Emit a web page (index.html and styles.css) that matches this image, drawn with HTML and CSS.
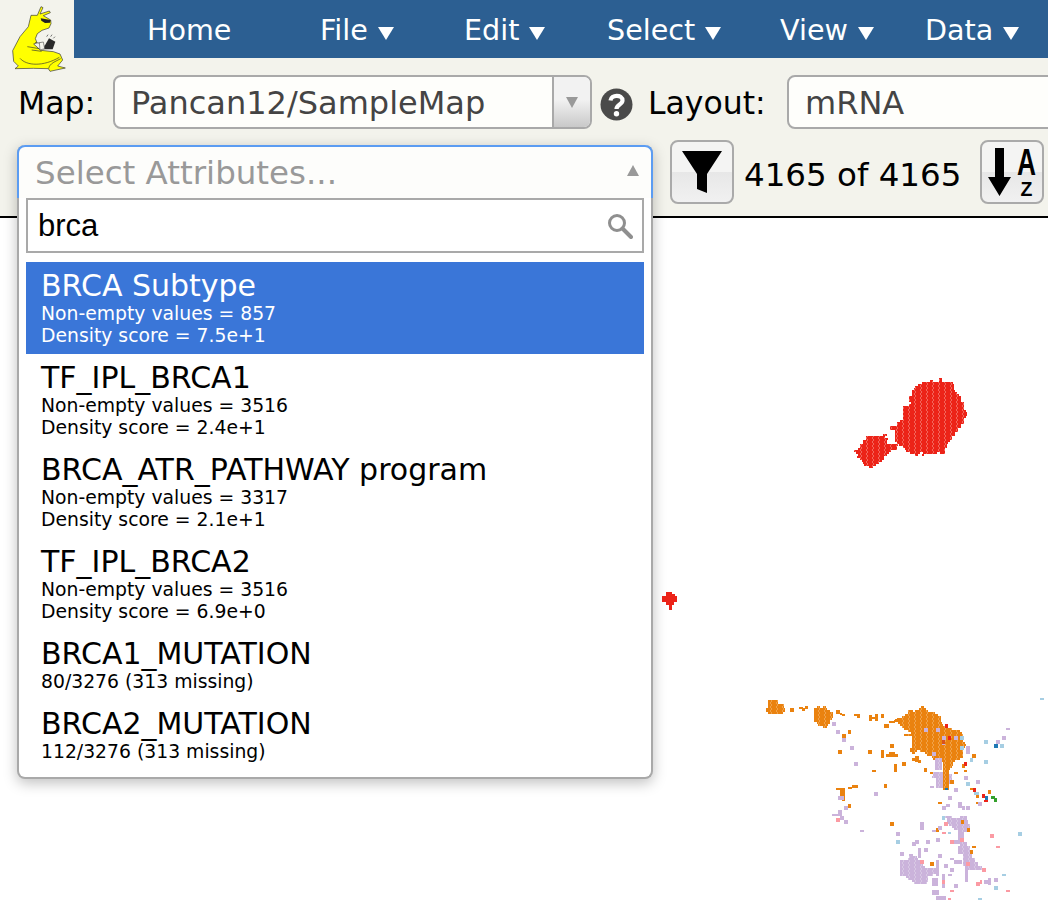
FILE: index.html
```html
<!DOCTYPE html>
<html lang="en">
<head>
<meta charset="utf-8">
<title>Tumor Map</title>
<link rel="stylesheet" href="styles.css">
</head>
<body>
<header class="header">
  <div class="top">
    <div class="logo">
      <svg width="74" height="74" viewBox="0 0 222 222">
        <path d="M93 46 L112 46 L123 20 L129 23 L120 42 L148 33 L151 38 L130 47 L152 60 L153 71 L147 84 L126 91 L112 101 L106 116 L111 128 L101 132 L122 151 L160 155 L180 162 L188 180 L173 198 L196 204 L150 214 L145 206 L100 205 L45 206 L55 198 L41 184 L38 152 L60 110 L85 80 Z" fill="#ffff00" stroke="#333" stroke-width="2"/>
        <path d="M122 55 L152 60 L150 68 L135 69 L124 62 Z" fill="#222"/>
        <path d="M128 148 L147 115 L166 125 L158 148 Z" fill="#2a2a2a"/>
        <path d="M140 110 L144 104 M152 110 L156 104 M160 115 L165 110" stroke="#333" stroke-width="2"/>
        <path d="M105 128 L128 130 L132 138 L120 140 M82 140 L118 146 M95 150 L125 154 M60 175 C80 198 130 200 178 172 M146 206 C148 190 168 184 182 176" fill="none" stroke="#333" stroke-width="2"/>
        <path d="M118 128 L130 126 L134 146 L120 150 Z" fill="#f4f4ec" stroke="#333" stroke-width="1.500"/>
      </svg>
    </div>
    <nav class="nav">
      <a class="nav-item nav-home">Home</a>
      <a class="nav-item nav-file">File <i class="caret"></i></a>
      <a class="nav-item nav-edit">Edit <i class="caret"></i></a>
      <a class="nav-item nav-select">Select <i class="caret"></i></a>
      <a class="nav-item nav-view">View <i class="caret"></i></a>
      <a class="nav-item">Data <i class="caret"></i></a>
    </nav>
  </div>
  <div class="row-map">
    <span class="label">Map:</span>
    <div class="select map-select">
      <span class="select-text">Pancan12/SampleMap</span>
      <span class="select-arrow"><i class="arrow-down"></i></span>
    </div>
    <svg class="help" width="33" height="33" viewBox="0 0 33 33">
      <circle cx="16.500" cy="16.500" r="16" fill="#4a4a4a"/>
      <path d="M10.500 12.500 C11 6.500 22.500 6 22.500 12.500 C22.500 16.500 16.500 16.500 16.500 21" fill="none" stroke="#fff" stroke-width="4.200"/>
      <circle cx="16.500" cy="25.800" r="2.700" fill="#fff"/>
    </svg>
    <span class="label label-layout">Layout:</span>
    <div class="select layout-select"><span class="select-text">mRNA</span></div>
  </div>
  <div class="row-attr">
    <div class="attr-spacer"></div>
    <button class="tool-btn">
      <svg width="40" height="42" viewBox="0 0 40 42"><path d="M0 0 H40 L25 23 V42 L15 38 V23 Z" fill="#000"/></svg>
    </button>
    <span class="count">4165 of 4165</span>
    <button class="tool-btn">
      <svg width="56" height="52" viewBox="0 0 56 52">
        <path d="M11 2 H20 V31 H27 L15.500 50 L4 31 H11 Z" fill="#000"/>
        <text class="sort-a" x="42.500" y="29" text-anchor="middle" textLength="19" lengthAdjust="spacingAndGlyphs">A</text>
        <text class="sort-z" x="42.500" y="50" text-anchor="middle">Z</text>
      </svg>
    </button>
  </div>
</header>

<main class="canvas">
  <svg class="map" width="1048" height="682" viewBox="0 218 1048 682" shape-rendering="crispEdges">
    <defs>
      <pattern id="stripe-red" width="18" height="12" patternUnits="userSpaceOnUse">
        <rect width="18" height="12" fill="#ec2318"/>
        <rect x="6" width="3" height="6" fill="#f2665c"/>
        <rect x="9" y="6" width="3" height="6" fill="#f2665c"/>
      </pattern>
      <pattern id="stripe-orange" width="18" height="12" patternUnits="userSpaceOnUse">
        <rect width="18" height="12" fill="#ea820f"/>
        <rect x="6" width="3" height="6" fill="#f0a24a"/>
        <rect x="9" y="6" width="3" height="6" fill="#f0a24a"/>
      </pattern>
      <pattern id="stripe-purple" width="18" height="12" patternUnits="userSpaceOnUse">
        <rect width="18" height="12" fill="#cbb3db"/>
        <rect x="6" width="3" height="6" fill="#d8c8e4"/>
        <rect x="9" y="6" width="3" height="6" fill="#d8c8e4"/>
      </pattern>
    </defs>

    <g transform="translate(840 365) scale(.33333)">
      <path fill="url(#stripe-red)" d="M298 40h8v6h-8z M270 46h10v6h-10z M298 46h8v6h-8z M245 52h95v6h-95z M235 58h107v6h-107z M225 64h117v6h-117z M222 70h120v6h-120z M216 76h129v6h-129z M216 82h136v6h-136z M216 88h142v6h-142z M207 94h157v6h-157z M207 100h157v6h-157z M207 106h157v6h-157z M213 112h159v6h-159z M207 118h165v6h-165z M188 124h184v6h-184z M188 130h184v6h-184z M188 136h190v6h-190z M188 142h194v6h-194z M188 148h194v6h-194z M188 154h190v6h-190z M188 160h184v6h-184z M180 166h192v6h-192z M170 172h202v6h-202z M170 178h194v6h-194z M150 184h214v6h-214z M150 190h205v6h-205z M165 196h190v6h-190z M165 202h180v6h-180z M130 208h10v6h-10z M165 208h180v6h-180z M78 214h57v6h-57z M165 214h170v6h-170z M78 220h67v6h-67z M165 220h170v6h-170z M70 226h70v6h-70z M165 226h165v6h-165z M68 232h72v6h-72z M170 232h155v6h-155z M60 238h115v6h-115z M178 238h142v6h-142z M60 244h110v6h-110z M190 244h130v6h-130z M55 250h115v6h-115z M195 250h120v6h-120z M42 256h110v6h-110z M198 256h118v6h-118z M48 262h100v6h-100z M210 262h30v6h-30z M250 262h40v6h-40z M300 262h15v6h-15z M55 268h85v6h-85z M225 268h10v6h-10z M245 268h8v6h-8z M50 274h82v6h-82z M60 280h72v6h-72z M65 286h62v6h-62z M68 292h50v6h-50z M72 298h36v6h-36z M86 304h12v5h-12z"/>
    </g>

    <path fill="#ec2318" d="M666 592 H672 V594 H675 V596 H677 V602 H674 V605 H672 V610 H669 V605 H666 V602 H662 V596 H666 Z"/>

    <g transform="translate(750 690) scale(.33333)">
      <path fill="url(#stripe-orange)" d="M55 30h29v12h-29z M55 42h47v12h-47z M48 54h57v12h-57z M55 66h45v5h-45z"/>
      <path fill="url(#stripe-orange)" d="M200 48h10v6h-10z M218 48h10v6h-10z M192 54h40v6h-40z M192 60h48v6h-48z M192 66h58v18h-58z M192 84h53v6h-53z M192 90h48v6h-48z M200 96h40v6h-40z M205 102h30v6h-30z M218 108h12v5h-12z"/>
      <path fill="url(#stripe-orange)" d="M512 48h10v6h-10z M508 54h20v6h-20z M475 60h13v6h-13z M495 60h40v6h-40z M475 66h80v6h-80z M465 72h100v6h-100z M455 78h117v6h-117z M440 84h132v6h-132z M432 90h140v6h-140z M445 96h130v6h-130z M450 102h130v6h-130z M455 108h135v6h-135z M462 114h143v6h-143z M475 120h155v6h-155z M482 126h154v6h-154z M462 132h178v6h-178z M486 138h156v12h-156z M486 150h154v6h-154z M486 156h159v6h-159z M486 162h162v6h-162z M486 168h159v6h-159z M480 174h160v6h-160z M480 180h20v6h-20z M510 180h130v6h-130z M485 186h10v6h-10z M525 186h115v6h-115z M530 192h110v6h-110z M545 198h95v6h-95z M550 204h80v6h-80z M575 210h40v6h-40z M578 216h32v12h-32z M578 228h27v6h-27z M578 234h22v6h-22z M578 240h20v60h-20z"/>
      <path fill="url(#stripe-purple)" d="M478 492h12v6h-12z M478 498h22v6h-22z M474 504h31v6h-31z M450 510h62v6h-62z M450 516h70v12h-70z M450 528h75v6h-75z M450 534h110v6h-110z M450 540h115v6h-115z M450 546h110v6h-110z M450 552h100v6h-100z M468 558h67v6h-67z M474 564h61v6h-61z M486 570h49v6h-49z M492 576h38v6h-38z"/>
      <path fill="url(#stripe-purple)" d="M585 378h20v6h-20z M630 378h20v6h-20z M590 384h60v6h-60z M590 390h65v12h-65z M596 402h64v6h-64z M605 408h55v6h-55z M612 414h38v6h-38z M625 420h25v6h-25z"/>
      <path fill="url(#stripe-purple)" d="M630 456h20v12h-20z M625 468h35v12h-35z M625 480h35v12h-35z M640 492h25v12h-25z M640 504h35v12h-35z M640 516h45v12h-45z M645 528h50v12h-50z M645 540h10v36h-10z"/>
      <path fill="url(#stripe-purple)" d="M550 246h28v12h-28z M545 258h33v6h-33z M558 264h20v30h-20z M596 252h10v30h-10z M555 204h20v36h-20z"/>
      <g fill="#ea820f">
        <rect x="120" y="54" width="12" height="12"/><rect x="146" y="50" width="12" height="8"/><rect x="156" y="54" width="9" height="10"/><rect x="165" y="48" width="9" height="10"/>
        <rect x="258" y="60" width="12" height="12"/><rect x="270" y="68" width="6" height="6"/><rect x="276" y="72" width="10" height="5"/><rect x="312" y="72" width="18" height="6"/><rect x="322" y="76" width="8" height="8"/>
        <rect x="356" y="74" width="10" height="20"/><rect x="366" y="80" width="8" height="8"/><rect x="374" y="72" width="10" height="22"/><rect x="392" y="72" width="10" height="12"/>
        <rect x="402" y="102" width="16" height="12"/><rect x="416" y="92" width="20" height="8"/><rect x="434" y="86" width="10" height="10"/>
        <rect x="294" y="120" width="10" height="12"/><rect x="276" y="132" width="12" height="12"/><rect x="264" y="180" width="12" height="12"/><rect x="354" y="180" width="12" height="12"/>
        <rect x="420" y="162" width="12" height="12"/><rect x="392" y="180" width="10" height="24"/><rect x="408" y="192" width="36" height="10"/><rect x="416" y="186" width="18" height="8"/>
        <rect x="432" y="222" width="10" height="24"/><rect x="456" y="216" width="12" height="12"/><rect x="486" y="204" width="18" height="8"/><rect x="496" y="198" width="10" height="18"/><rect x="504" y="210" width="10" height="10"/>
        <rect x="366" y="240" width="12" height="5"/><rect x="522" y="234" width="10" height="12"/><rect x="540" y="246" width="10" height="5"/><rect x="612" y="246" width="12" height="6"/><rect x="642" y="240" width="10" height="6"/>
        <rect x="258" y="294" width="28" height="6"/><rect x="270" y="300" width="16" height="22"/><rect x="276" y="322" width="10" height="10"/><rect x="294" y="292" width="12" height="6"/><rect x="306" y="284" width="18" height="10"/>
        <rect x="402" y="282" width="10" height="12"/><rect x="294" y="342" width="10" height="12"/><rect x="420" y="396" width="12" height="12"/>
        <rect x="636" y="222" width="10" height="12"/><rect x="666" y="192" width="12" height="12"/><rect x="600" y="270" width="12" height="12"/>
        <rect x="660" y="294" width="12" height="6"/><rect x="714" y="300" width="10" height="12"/><rect x="678" y="312" width="10" height="12"/><rect x="678" y="336" width="10" height="6"/>
        <rect x="564" y="336" width="12" height="6"/><rect x="632" y="390" width="10" height="12"/><rect x="558" y="414" width="10" height="12"/><rect x="650" y="414" width="10" height="12"/>
        <rect x="666" y="468" width="12" height="6"/><rect x="660" y="480" width="10" height="12"/><rect x="540" y="516" width="12" height="12"/>
      </g>
      <g fill="#cbb3db">
        <rect x="246" y="96" width="12" height="12"/><rect x="258" y="120" width="12" height="12"/><rect x="276" y="144" width="12" height="12"/><rect x="300" y="168" width="12" height="12"/><rect x="312" y="216" width="12" height="12"/>
        <rect x="522" y="114" width="12" height="12"/><rect x="558" y="114" width="12" height="12"/><rect x="576" y="138" width="12" height="12"/><rect x="612" y="138" width="12" height="12"/><rect x="576" y="156" width="10" height="10"/>
        <rect x="546" y="186" width="12" height="12"/><rect x="648" y="168" width="12" height="24"/><rect x="738" y="150" width="12" height="12"/><rect x="756" y="138" width="12" height="12"/><rect x="768" y="114" width="12" height="6"/>
        <rect x="642" y="258" width="12" height="12"/><rect x="678" y="270" width="12" height="12"/><rect x="612" y="294" width="12" height="12"/><rect x="540" y="288" width="12" height="6"/>
        <rect x="372" y="306" width="12" height="12"/><rect x="264" y="318" width="18" height="12"/><rect x="282" y="348" width="12" height="12"/><rect x="264" y="360" width="12" height="12"/><rect x="246" y="372" width="30" height="6"/><rect x="270" y="378" width="12" height="12"/><rect x="282" y="390" width="12" height="12"/>
        <rect x="594" y="318" width="12" height="12"/><rect x="576" y="348" width="12" height="12"/><rect x="588" y="342" width="12" height="10"/><rect x="624" y="336" width="12" height="18"/><rect x="636" y="348" width="10" height="12"/><rect x="648" y="348" width="12" height="12"/><rect x="684" y="336" width="12" height="12"/>
        <rect x="330" y="420" width="12" height="6"/><rect x="510" y="396" width="12" height="24"/><rect x="564" y="408" width="12" height="12"/><rect x="438" y="426" width="12" height="12"/><rect x="546" y="420" width="12" height="6"/>
        <rect x="624" y="426" width="18" height="24"/><rect x="486" y="456" width="12" height="12"/><rect x="496" y="450" width="10" height="12"/><rect x="528" y="450" width="12" height="12"/><rect x="558" y="444" width="12" height="12"/><rect x="612" y="450" width="20" height="12"/>
        <rect x="450" y="486" width="12" height="12"/><rect x="504" y="474" width="10" height="30"/><rect x="522" y="474" width="12" height="12"/><rect x="564" y="492" width="12" height="12"/>
        <rect x="558" y="510" width="10" height="48"/><rect x="600" y="504" width="12" height="6"/><rect x="612" y="510" width="24" height="12"/><rect x="582" y="522" width="12" height="12"/><rect x="600" y="534" width="12" height="12"/><rect x="594" y="552" width="12" height="6"/>
        <rect x="546" y="564" width="18" height="24"/><rect x="576" y="552" width="10" height="42"/><rect x="612" y="582" width="12" height="12"/><rect x="702" y="570" width="22" height="12"/><rect x="714" y="564" width="10" height="22"/><rect x="732" y="564" width="12" height="12"/>
        <rect x="546" y="600" width="22" height="16"/><rect x="558" y="618" width="30" height="12"/>
      </g>
      <g fill="#a6cee3">
        <rect x="702" y="150" width="12" height="12"/><rect x="750" y="162" width="12" height="12"/><rect x="702" y="210" width="12" height="12"/><rect x="660" y="204" width="10" height="12"/>
        <rect x="630" y="138" width="12" height="12"/><rect x="630" y="168" width="12" height="12"/><rect x="648" y="276" width="12" height="12"/><rect x="870" y="24" width="12" height="6"/>
        <rect x="672" y="306" width="16" height="10"/><rect x="576" y="378" width="10" height="12"/><rect x="804" y="426" width="12" height="12"/><rect x="438" y="450" width="12" height="12"/><rect x="732" y="588" width="12" height="12"/><rect x="756" y="552" width="12" height="6"/><rect x="684" y="624" width="12" height="6"/><rect x="594" y="426" width="10" height="6"/>
      </g>
      <g fill="#fb9aa3">
        <rect x="258" y="384" width="12" height="12"/><rect x="582" y="396" width="12" height="12"/><rect x="576" y="426" width="12" height="6"/><rect x="720" y="432" width="12" height="12"/><rect x="600" y="450" width="12" height="12"/><rect x="630" y="444" width="12" height="12"/><rect x="738" y="468" width="12" height="6"/>
        <rect x="510" y="510" width="12" height="12"/><rect x="648" y="516" width="12" height="12"/><rect x="696" y="534" width="12" height="12"/><rect x="576" y="570" width="10" height="12"/><rect x="678" y="576" width="12" height="12"/><rect x="690" y="570" width="6" height="12"/><rect x="768" y="600" width="12" height="6"/><rect x="600" y="600" width="12" height="6"/><rect x="594" y="624" width="10" height="6"/>
      </g>
      <g fill="#ec2318">
        <rect x="585" y="102" width="10" height="12"/><rect x="594" y="138" width="10" height="12"/><rect x="642" y="216" width="10" height="12"/><rect x="669" y="294" width="10" height="12"/><rect x="696" y="312" width="10" height="12"/><rect x="702" y="330" width="12" height="6"/>
      </g>
      <rect x="576" y="150" width="10" height="12" fill="#d9531c"/>
      <g fill="#1f78b4">
        <rect x="732" y="162" width="12" height="12"/><rect x="705" y="318" width="10" height="12"/><rect x="585" y="294" width="10" height="6"/>
      </g>
      <g fill="#33a02c">
        <rect x="722" y="318" width="12" height="10"/><rect x="732" y="324" width="10" height="12"/>
      </g>
    </g>
  </svg>

  <div class="dropdown">
    <div class="dropdown-head">
      <span class="placeholder">Select Attributes...</span>
      <i class="arrow-up"></i>
    </div>
    <div class="search">
      <span class="search-text">brca</span>
      <svg width="26" height="26" viewBox="0 0 26 26"><circle cx="10" cy="10" r="7.500" fill="none" stroke="#8f8f8f" stroke-width="3"/><path d="M15.500 15.500 L24 24" stroke="#8f8f8f" stroke-width="4" stroke-linecap="round"/></svg>
    </div>
    <ul class="results">
      <li class="result is-active"><div class="result-title">BRCA Subtype</div><div class="result-sub">Non-empty values = 857</div><div class="result-sub">Density score = 7.5e+1</div></li>
      <li class="result"><div class="result-title">TF_IPL_BRCA1</div><div class="result-sub">Non-empty values = 3516</div><div class="result-sub">Density score = 2.4e+1</div></li>
      <li class="result"><div class="result-title">BRCA_ATR_PATHWAY program</div><div class="result-sub">Non-empty values = 3317</div><div class="result-sub">Density score = 2.1e+1</div></li>
      <li class="result"><div class="result-title">TF_IPL_BRCA2</div><div class="result-sub">Non-empty values = 3516</div><div class="result-sub">Density score = 6.9e+0</div></li>
      <li class="result"><div class="result-title">BRCA1_MUTATION</div><div class="result-sub">80/3276 (313 missing)</div></li>
      <li class="result"><div class="result-title">BRCA2_MUTATION</div><div class="result-sub">112/3276 (313 missing)</div></li>
    </ul>
  </div>
</main>
</body>
</html>
```
FILE: styles.css
```css
* { box-sizing: border-box; }
html, body { margin: 0; padding: 0; height: 900px; overflow: hidden; background: #fff; }
body { font-family: "DejaVu Sans", sans-serif; color: #000; width: 1048px; }

.header { height: 218px; background: #f3f3ec; border-bottom: 2px solid #000; overflow: hidden; }
.top { display: flex; height: 58px; }
.logo { width: 74px; height: 74px; flex: none; position: relative; z-index: 1; }
.nav { flex: 1; background: #2c5f92; display: flex; padding: 2px 0 0 73px; align-items: center; height: 58px; }
.nav-item { color: #fff; font-size: 28.600px; white-space: nowrap; }
.nav-home { width: 173px; }
.nav-file { width: 144px; }
.nav-edit { width: 143px; }
.nav-select { width: 173px; }
.nav-view { width: 145px; }
.caret { display: inline-block; width: 0; height: 0; border-left: 8px solid transparent; border-right: 8px solid transparent; border-top: 13px solid #fff; margin-left: 1px; vertical-align: 0; }

.row-map { display: flex; align-items: center; height: 54px; margin-top: 17px; padding-left: 18px; }
.label { font-size: 31.500px; width: 95px; flex: none; white-space: nowrap; padding-top: 2px; }
.select { height: 54px; background: #fefefb; border: 2px solid #a9a9a9; border-radius: 8px; display: flex; align-items: center; overflow: hidden; flex: none; }
.select-text { font-size: 32px; color: #444; padding: 2px 0 0 16px; flex: 1; white-space: nowrap; }
.map-select { width: 479px; }
.select-arrow { width: 38px; height: 100%; flex: none; border-left: 2px solid #a9a9a9; background: linear-gradient(#f2f2f2 45%, #c9c9c9); display: flex; align-items: center; justify-content: center; }
.arrow-down { width: 0; height: 0; border-left: 6px solid transparent; border-right: 6px solid transparent; border-top: 11px solid #999; }
.help { flex: none; margin: 5px 0 0 8px; }
.label-layout { margin-left: 15px; width: 139px; }
.layout-select { width: 300px; }

.row-attr { display: flex; align-items: center; height: 64px; margin-top: 11px; }
.attr-spacer { width: 670px; flex: none; }
.tool-btn { height: 64px; width: 64px; padding: 0; flex: none; border: 2px solid #aaa; border-radius: 8px; background: linear-gradient(#f4f4f3 50%, #e7e7e7 50%, #f1f1f1); display: flex; align-items: center; justify-content: center; }
.tool-btn svg { overflow: visible; }
.count { font-size: 32.500px; width: 246px; padding: 5px 0 0 10px; flex: none; white-space: nowrap; }
.sort-a { font: bold 36px "Liberation Sans", sans-serif; }
.sort-z { font: bold 19.500px "Liberation Sans", sans-serif; }

.canvas { position: relative; width: 1048px; height: 682px; }
.map { position: absolute; left: 0; top: 0; display: block; }

.dropdown { position: absolute; left: 17px; top: -73px; width: 636px; height: 634px; background: #fff; border: 2px solid #a9a9a9; border-top: 0; border-radius: 8px; box-shadow: 0 4px 14px rgba(0,0,0,.25); padding: 0 7px; }
.dropdown-head { height: 53px; margin: 0 -9px; background: #fdfdfb; border: 2px solid #5b9cf2; border-bottom: 0; border-radius: 8px 8px 0 0; display: flex; align-items: center; justify-content: space-between; padding: 0 12px 0 16px; }
.placeholder { font-size: 32.500px; color: #999; white-space: nowrap; }
.arrow-up { width: 0; height: 0; border-left: 6.500px solid transparent; border-right: 6.500px solid transparent; border-bottom: 11px solid #999; margin-top: -4px; }
.search { height: 55px; border: 2px solid #a9a9a9; display: flex; align-items: center; justify-content: space-between; padding: 0 9px 0 10px; background: #fff; }
.search-text { font: 31px "Liberation Sans", sans-serif; }
.results { list-style: none; margin: 9px 0 0; padding: 0; }
.result { padding: 6px 15px 7px; }
.result-title { font-size: 30px; line-height: 35px; white-space: nowrap; }
.result-sub { font-size: 18.800px; line-height: 22px; white-space: nowrap; }
.is-active { background: #3a76d8; color: #fff; }
```
